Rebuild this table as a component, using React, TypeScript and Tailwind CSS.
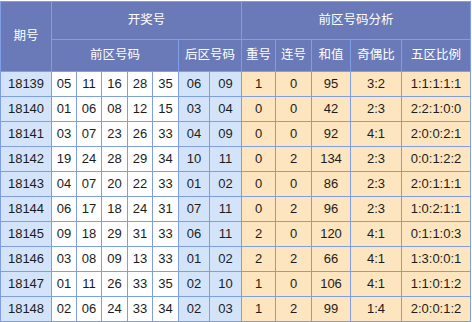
import React from "react";

const rows: string[][] = [
  ["18139", "05", "11", "16", "28", "35", "06", "09", "1", "0", "95", "3:2", "1:1:1:1:1"],
  ["18140", "01", "06", "08", "12", "15", "03", "04", "0", "0", "42", "2:3", "2:2:1:0:0"],
  ["18141", "03", "07", "23", "26", "33", "04", "09", "0", "0", "92", "4:1", "2:0:0:2:1"],
  ["18142", "19", "24", "28", "29", "34", "10", "11", "0", "2", "134", "2:3", "0:0:1:2:2"],
  ["18143", "04", "07", "20", "22", "33", "01", "02", "0", "0", "86", "2:3", "2:0:1:1:1"],
  ["18144", "06", "17", "18", "24", "31", "07", "11", "0", "2", "96", "2:3", "1:0:2:1:1"],
  ["18145", "09", "18", "29", "31", "33", "06", "11", "2", "0", "120", "4:1", "0:1:1:0:3"],
  ["18146", "03", "08", "09", "13", "33", "01", "02", "2", "2", "66", "4:1", "1:3:0:0:1"],
  ["18147", "01", "11", "26", "33", "35", "02", "10", "1", "0", "106", "4:1", "1:1:0:1:2"],
  ["18148", "02", "06", "24", "33", "34", "02", "03", "1", "2", "99", "1:4", "2:0:0:1:2"],
];

const widths = [51, 25, 25, 26, 25, 26, 31, 32, 34, 36, 39, 51, 69];

export default function App() {
  const cellBg = (i: number) => {
    if (i === 0) return "bg-[#d3e4fa]";
    if (i >= 1 && i <= 5) return "bg-white";
    if (i === 6 || i === 7) return "bg-[#d3e4fa]";
    return "bg-[#fde5bf]";
  };
  return (
    <div className="w-[472px] h-[322px] bg-white pt-px">
      <table
        className="border-collapse table-fixed w-[470px] text-[13px] text-[#1c1c1c]"
        style={{ fontFamily: '"Liberation Sans", Arial, "Noto Sans CJK SC", sans-serif' }}
      >
        <colgroup>
          {widths.map((w, i) => (
            <col key={i} style={{ width: w }} />
          ))}
        </colgroup>
        <thead className="text-white bg-[#6a7ab8] text-[12.5px]">
          <tr className="h-[38px]">
            <th rowSpan={2} className="border border-[#7f9ee6] font-normal">期号</th>
            <th colSpan={7} className="border border-[#7f9ee6] font-normal">开奖号</th>
            <th colSpan={5} className="border border-[#7f9ee6] font-normal">前区号码分析</th>
          </tr>
          <tr className="h-[32px]">
            <th colSpan={5} className="border border-[#7f9ee6] font-normal">前区号码</th>
            <th colSpan={2} className="border border-[#7f9ee6] font-normal">后区号码</th>
            <th className="border border-[#7f9ee6] font-normal">重号</th>
            <th className="border border-[#7f9ee6] font-normal">连号</th>
            <th className="border border-[#7f9ee6] font-normal">和值</th>
            <th className="border border-[#7f9ee6] font-normal">奇偶比</th>
            <th className="border border-[#7f9ee6] font-normal">五区比例</th>
          </tr>
        </thead>
        <tbody>
          {rows.map((r) => (
            <tr key={r[0]} className="h-[25px]">
              {r.map((c, i) => (
                <td key={i} className={`border border-[#7f9ee6] text-center p-0 ${cellBg(i)}`}>
                  {c}
                </td>
              ))}
            </tr>
          ))}
        </tbody>
      </table>
    </div>
  );
}
